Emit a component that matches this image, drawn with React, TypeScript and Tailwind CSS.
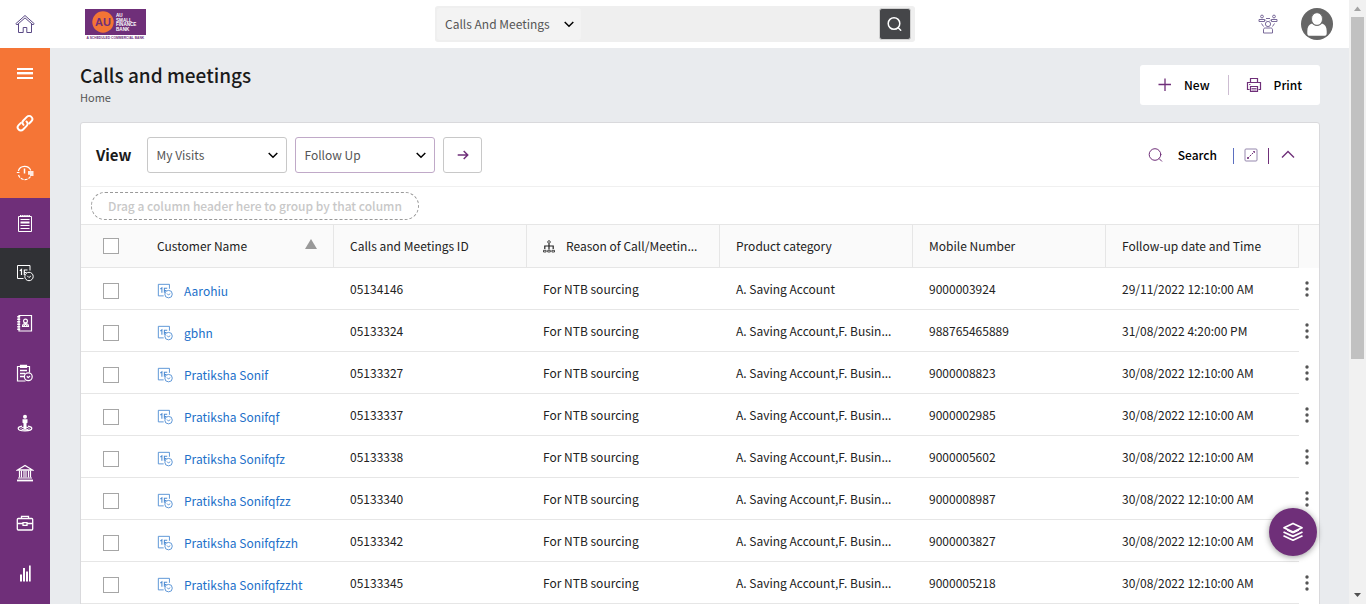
import React from "react";

type IconProps = { className?: string };

const HomeIcon = ({ className }: IconProps) => (
  <svg className={className} viewBox="0 0 20 20" fill="none" stroke="currentColor" strokeWidth="1">
    <path d="M0.8 9.7 10 1.500l9.200 8.200-1.200 1.200L10 3.900 2 10.900z" />
    <path d="M3.500 10v8.500h4.700v-5h3.600v5h4.700V10" />
  </svg>
);

const MenuIcon = ({ className }: IconProps) => (
  <svg className={className} viewBox="0 0 18 18" fill="currentColor" shapeRendering="crispEdges">
    <path d="M1 4h16v2H1zM1 8h16v2H1zM1 13h16v2H1z" />
    <path d="M1 10h16v1H1z" opacity=".4" />
  </svg>
);

const LinkIcon = ({ className }: IconProps) => (
  <svg className={className} viewBox="0 0 24 24" fill="none" stroke="currentColor" strokeWidth="2.600" strokeLinecap="round" strokeLinejoin="round">
    <path d="M10 14.500c-1.800-1.800-1.800-4.200-.2-5.800l4.700-4.900c1.700-1.700 4.400-1.700 6 0 1.600 1.600 1.600 4.200 0 5.800l-3 3" />
    <path d="M14 10c1.800 1.800 1.800 4.200.2 5.800l-4.700 4.900c-1.700 1.700-4.400 1.700-6 0-1.600-1.600-1.600-4.200 0-5.800l3-3" />
  </svg>
);

const TimerIcon = ({ className }: IconProps) => (
  <svg className={className} viewBox="0 0 18 18" fill="none" stroke="currentColor" strokeWidth="1.200">
    <path d="M2.300 7a6.700 6.700 0 0 1 12.500-.5M.8 8.500h2.700" />
    <path d="M2.500 11a6.700 6.700 0 0 0 12 1.500" strokeDasharray="3 1" />
    <path d="M8.500 4.500v5" strokeWidth="1.500" />
    <path d="M12 7h5.500v5H14v-1.200h-2z" fill="currentColor" stroke="none" opacity=".85" />
  </svg>
);

const NotepadIcon = ({ className }: IconProps) => (
  <svg className={className} viewBox="0 0 18 18" fill="none" stroke="currentColor">
    <path d="M2.500 2.500h13v15h-13z" />
    <path d="M4 2h10" strokeWidth="2" strokeDasharray="1.500 .6" />
    <path d="M4.500 5.500h9M4.500 11.500h9M4.500 14.500h9" />
    <path d="M4.500 8.500h9" strokeWidth="2" />
  </svg>
);

const CalendarIcon = ({ className }: IconProps) => (
  <svg className={className} viewBox="0 0 18 18" fill="none" stroke="currentColor">
    <path d="M7.500 14.500h-6v-13h12.500v5" />
    <path d="M3.800 6.800 5.500 5.500V11M11.500 6H8.300v2.500h2.200M8.300 8.500V11" strokeWidth="1.200" />
    <circle cx="13" cy="12.500" r="4.200" />
    <path d="m11.200 11.800 1.700 1.700 2-1.500" />
  </svg>
);

const ContactIcon = ({ className }: IconProps) => (
  <svg className={className} viewBox="0 0 18 18" fill="none" stroke="currentColor">
    <path d="M3 1.500h12.500v15.500H3z" strokeWidth="1.200" />
    <path d="M2.700 2v15" strokeWidth="3" strokeDasharray="1.500 1" />
    <circle cx="9.500" cy="7" r="1.900" strokeWidth="1.200" />
    <path d="M6.500 12.500c0-2 1-3 3-3s3 1 3 3zM8 12l1.500-2 1.500 2" strokeWidth="1.200" />
  </svg>
);

const ClipboardClockIcon = ({ className }: IconProps) => (
  <svg className={className} viewBox="0 0 18 18" fill="none" stroke="currentColor" strokeWidth="1.200">
    <path d="M9.500 17h-8V2.500h12v6" />
    <path d="M4.500 1.300h6v2.200h-6z" />
    <path d="M4 6.500h7M4 9.500h5M4 12.500h4" strokeWidth="1.400" />
    <circle cx="12.300" cy="12.800" r="3.900" />
    <path d="m10.800 12.300 1.400 1.300 1.800-1.600" />
  </svg>
);

const PersonPinIcon = ({ className }: IconProps) => (
  <svg className={className} viewBox="0 0 18 18" fill="none" stroke="currentColor">
    <circle cx="9" cy="2.800" r="2" fill="currentColor" stroke="none" />
    <path d="M6.500 5.300h5v3.500l-1 .5v6h-3v-6l-1-.5z" fill="currentColor" stroke="none" />
    <ellipse cx="9" cy="14.500" rx="4" ry="1.400" />
    <path d="M6 12.200c-2.400.4-3.800 1.200-3.800 2.200 0 1.400 3 2.400 6.800 2.400s6.800-1 6.800-2.400c0-1-1.400-1.800-3.800-2.200" strokeWidth="1.200" />
  </svg>
);

const BankIcon = ({ className }: IconProps) => (
  <svg className={className} viewBox="0 0 18 18" fill="none" stroke="currentColor">
    <path d="M1.500 6 9 1.500 16.500 6z" strokeWidth="1.300" />
    <path d="M3.500 6.500v7M5.500 6.500v7M8 6.500v7M10 6.500v7M12.500 6.500v7M14.500 6.500v7" strokeWidth="1.200" />
    <path d="M2 14h14" />
    <path d="M1 16.500h16" strokeWidth="1.800" />
  </svg>
);

const BriefcaseIcon = ({ className }: IconProps) => (
  <svg className={className} viewBox="0 0 18 18" fill="none" stroke="currentColor" strokeWidth="1.300">
    <rect x="1.300" y="4.500" width="15.400" height="11.500" rx="1" />
    <path d="M5.500 4.500V2.300h7v2.200M1.500 9.500h5.500M11 9.500h5.500M7 8.700h4v2.600H7z" />
  </svg>
);

const BarsIcon = ({ className }: IconProps) => (
  <svg className={className} viewBox="0 0 18 18" fill="currentColor">
    <path d="M4 10.500h2V17.500H4zM7 4h2v13.500H7zM10 7.500h2v10h-2zM13 1.500h1.700v16H13z" />
  </svg>
);

const TeamIcon = ({ className }: IconProps) => (
  <svg className={className} viewBox="0 0 20 20" fill="none" stroke="currentColor" strokeWidth=".9">
    <circle cx="4" cy="2.500" r="1.400" />
    <circle cx="16" cy="2.500" r="1.400" />
    <path d="M1 7.500V5.500h5.500v2zM13.500 7.500V5.500H19v2zM8 4.500h4M3.500 9.500l2 3M16.500 9.500l-2 3M7 5.500l1 1.200M13 5.500l-1 1.200" />
    <circle cx="10" cy="10" r="2.600" />
    <path d="M5.500 19v-3.200c0-1.300.7-1.800 1.800-1.800h5.400c1.100 0 1.800.5 1.800 1.800V19z" />
  </svg>
);

const AvatarIcon = ({ className }: IconProps) => (
  <svg className={className} viewBox="0 0 32 32">
    <circle cx="16" cy="16" r="16" fill="#666" />
    <path d="M11 15.500c1.300 1.600 3 2.400 5 2.400s3.700-.8 5-2.400c3 .8 4.700 3.200 4.700 7.500v2.500c0 1.400-1 2.300-2.500 2.300H8.800c-1.500 0-2.500-.9-2.500-2.300V23c0-4.300 1.700-6.700 4.700-7.500z" fill="#fff" />
    <ellipse cx="16" cy="11" rx="5.500" ry="6.300" fill="#fff" stroke="#666" strokeWidth=".8" />
  </svg>
);

const SearchIcon = ({ className }: IconProps) => (
  <svg className={className} viewBox="0 0 16 16" fill="none" stroke="currentColor" strokeLinecap="round">
    <circle cx="7" cy="7.500" r="5.800" />
    <path d="m11.200 11.700 2.500 2.500" />
  </svg>
);

const PlusIcon = ({ className }: IconProps) => (
  <svg className={className} viewBox="0 0 14 14" stroke="currentColor" strokeWidth="1.300">
    <path d="M7 .5v12.500M.5 6.500h12.500" />
  </svg>
);

const PrinterIcon = ({ className }: IconProps) => (
  <svg className={className} viewBox="0 0 16 16" fill="none" stroke="currentColor" strokeWidth="1.200">
    <path d="M4.500 5.500v-4h7v4M3.500 12.500h-2v-7h13v7h-2M4.500 9.500h7v5h-7z" />
    <path d="M5.500 11.500h5M5.500 13h5M3 7.500h1.500" strokeWidth=".8" />
  </svg>
);

const ExpandIcon = ({ className }: IconProps) => (
  <svg className={className} viewBox="0 0 14 14" fill="none" stroke="currentColor">
    <rect x="1" y="1" width="12" height="12" rx="1" stroke="#9587ad" />
    <path d="m3.500 10.500 7-7" strokeDasharray="2 1" />
    <path d="M9 3.500h1.500V5M3.500 9v1.500H5" strokeWidth=".8" />
  </svg>
);

const ChevronUp = ({ className }: IconProps) => (
  <svg className={className} viewBox="0 0 14 14" fill="none" stroke="currentColor" strokeWidth="1.400">
    <path d="M1 9.500l6-6 6 6" />
  </svg>
);

const ChevronDown = ({ className }: IconProps) => (
  <svg className={className} viewBox="0 0 12 12" fill="none" stroke="currentColor" strokeWidth="1.500">
    <path d="m1.700 4 4.300 4.200L10.300 4" />
  </svg>
);

const ArrowRight = ({ className }: IconProps) => (
  <svg className={className} viewBox="0 0 12 12" fill="none" stroke="currentColor" strokeWidth="1.500">
    <path d="M.7 6h10M6.700 2l4 4-4 4" />
  </svg>
);

const HierarchyIcon = ({ className }: IconProps) => (
  <svg className={className} viewBox="0 0 14 14" fill="none" stroke="currentColor">
    <circle cx="6" cy="3" r="1.300" strokeWidth=".8" />
    <path d="M6 4.500v6M1.800 10V7h8.400v3" strokeWidth="1.200" />
    <path d="M.5 13v-1.700h2.600V13zM4.700 13v-1.700h2.600V13zM8.900 13v-1.700h2.600V13z" strokeWidth=".8" />
  </svg>
);

const LayersIcon = ({ className }: IconProps) => (
  <svg className={className} viewBox="0 0 22 20" fill="none" stroke="currentColor" strokeWidth="1.800" strokeLinejoin="round">
    <path d="m11 1.500 9 4.300-9 4.300-9-4.300z" />
    <path d="M1.500 10 11 14.400l9.500-4.400M1.500 13.800 11 18.200l9.500-4.400" />
    <path d="m5 8.300 6 2.800 6-2.800" strokeWidth="1" />
  </svg>
);

const Logo = () => (
  <svg viewBox="0 0 61 31" className="h-[31px] w-[61px]" role="img" aria-label="AU Small Finance Bank" fontFamily="Liberation Sans, sans-serif" fontWeight="bold">
    <rect width="61" height="26" fill="#6f2f79" />
    <circle cx="18" cy="13" r="10.700" fill="#f37435" />
    <text x="18" y="17" fontSize="11" textAnchor="middle" fill="#6f2f79">AU</text>
    <g fill="#fff" fontSize="4.600">
      <text x="31" y="8.300">AU</text>
      <text x="31" y="12.800">SMALL</text>
      <text x="31" y="17.300">FINANCE</text>
      <text x="31" y="21.800">BANK</text>
    </g>
    <text x="1.500" y="30" fontSize="3.300" fill="#6f2f79">A SCHEDULED COMMERCIAL BANK</text>
  </svg>
);

const navItems = [
  { label: "Menu", icon: MenuIcon, tone: "bg-[#f57536]" },
  { label: "Quick links", icon: LinkIcon, tone: "bg-[#f57536]" },
  { label: "Recent", icon: TimerIcon, tone: "bg-[#f57536]" },
  { label: "Notes", icon: NotepadIcon, tone: "bg-[#6f2f79]" },
  { label: "Calls and meetings", icon: CalendarIcon, tone: "bg-[#303135]" },
  { label: "Contacts", icon: ContactIcon, tone: "bg-[#6f2f79]" },
  { label: "Tasks", icon: ClipboardClockIcon, tone: "bg-[#6f2f79]" },
  { label: "Leads", icon: PersonPinIcon, tone: "bg-[#6f2f79]" },
  { label: "Accounts", icon: BankIcon, tone: "bg-[#6f2f79]" },
  { label: "Opportunities", icon: BriefcaseIcon, tone: "bg-[#6f2f79]" },
  { label: "Reports", icon: BarsIcon, tone: "bg-[#6f2f79]" },
];

const multi = "A. Saving Account,F. Busin...";
const rows = [
  ["Aarohiu", "05134146", "A. Saving Account", "9000003924", "29/11/2022 12:10:00 AM"],
  ["gbhn", "05133324", multi, "988765465889", "31/08/2022 4:20:00 PM"],
  ["Pratiksha Sonif", "05133327", multi, "9000008823", "30/08/2022 12:10:00 AM"],
  ["Pratiksha Sonifqf", "05133337", multi, "9000002985", "30/08/2022 12:10:00 AM"],
  ["Pratiksha Sonifqfz", "05133338", multi, "9000005602", "30/08/2022 12:10:00 AM"],
  ["Pratiksha Sonifqfzz", "05133340", multi, "9000008987", "30/08/2022 12:10:00 AM"],
  ["Pratiksha Sonifqfzzh", "05133342", multi, "9000003827", "30/08/2022 12:10:00 AM"],
  ["Pratiksha Sonifqfzzht", "05133345", multi, "9000005218", "30/08/2022 12:10:00 AM"],
];

const Checkbox = ({ label }: { label: string }) => (
  <input type="checkbox" aria-label={label} className="block size-4 appearance-none border border-[#a6a6a6] bg-white checked:bg-[#6f2f79]" />
);

function ViewSelect({ label, options, border }: { label: string; options: string[]; border: string }) {
  return (
    <div className="relative w-[140px]">
      <select aria-label={label} className={`h-9 w-full appearance-none rounded-[3px] border bg-white pl-2 text-[#555] ${border}`}>
        {options.map((o) => (
          <option key={o}>{o}</option>
        ))}
      </select>
      <ChevronDown className="pointer-events-none absolute top-3 right-2 size-3 text-black" />
    </div>
  );
}

const headCell = "border-r border-b border-[#e6e6e6] px-4 text-left font-normal whitespace-nowrap";
const bodyCell = "border-b border-[#e6e6e6] px-4 whitespace-nowrap";

export default function App() {
  return (
    <div className="flex h-screen overflow-hidden bg-[#e9ebee] font-['Noto_Sans_CJK_SC',sans-serif] text-xs leading-5 text-[#222]">
      <div className="flex min-w-0 flex-1 flex-col">
        <header className="flex h-12 shrink-0 items-center bg-white">
          <a href="#home" aria-label="Home" className="flex w-[50px] justify-center text-[#5b4a86]">
            <HomeIcon className="size-5" />
          </a>
          <div className="flex w-[385px] pl-[35px]">
            <Logo />
          </div>
          <form className="flex h-9 w-[480px] items-center rounded-[3px] bg-[#efefef] pr-1 pl-0.5" onSubmit={(e) => e.preventDefault()}>
            <div className="relative w-36">
              <select aria-label="Search in" className="h-8 w-full appearance-none rounded-[3px] bg-[#f3f3f3] pl-2 text-[#555]">
                <option>Calls And Meetings</option>
              </select>
              <ChevronDown className="pointer-events-none absolute top-2.5 right-1.5 size-3 text-black" />
            </div>
            <input type="search" aria-label="Search" className="h-8 min-w-0 flex-1 bg-transparent px-2 outline-none" />
            <button aria-label="Run search" className="flex size-8 items-center justify-center rounded-[3px] border border-[#d0d0d0] bg-[#454649] text-white">
              <SearchIcon className="size-4 stroke-[1.5]" />
            </button>
          </form>
          <div className="flex flex-1 items-center justify-end gap-[23px] pr-4">
            <button aria-label="Team" className="text-[#6b5a8e]">
              <TeamIcon className="size-5" />
            </button>
            <button aria-label="Profile">
              <AvatarIcon className="size-8" />
            </button>
          </div>
        </header>

        <div className="flex min-h-0 flex-1">
          <nav aria-label="Main" className="w-[50px] shrink-0 overflow-hidden bg-[#6f2f79] text-white">
            {navItems.map(({ label, icon: Icon, tone }) => (
              <a key={label} href="#nav" aria-label={label} className={`flex h-[50px] items-center justify-center ${tone}`}>
                <Icon className="size-[18px]" />
              </a>
            ))}
          </nav>

          <main className="min-w-0 flex-1 overflow-hidden pt-4 pr-[29px] pl-[30px]">
            <div className="flex items-start justify-between">
              <div>
                <h1 className="text-[19px] leading-[22px] font-medium text-[#1a1a1a]">Calls and meetings</h1>
                <a href="#home" className="mt-px block text-[11px] text-[#555]">Home</a>
              </div>
              <div className="mt-px flex h-10 items-center rounded-[3px] bg-white font-medium text-black">
                <button className="flex items-center gap-3 px-[18px]">
                  <PlusIcon className="size-3.5 text-[#6f2f79]" />
                  New
                </button>
                <span className="h-5 w-px bg-[#cdbdd2]" />
                <button className="flex items-center gap-3 pr-[18px] pl-[17px]">
                  <PrinterIcon className="size-4 text-[#6f2f79]" />
                  Print
                </button>
              </div>
            </div>

            <section className="mt-[15px] min-h-screen rounded-[3px] border border-[#d9d9dc] bg-white">
              <div className="flex h-16 items-center justify-between border-b border-[#f0f0f0] pr-6 pl-[15px]">
                <div className="flex items-center gap-2">
                  <h2 className="mr-2 text-[15px] font-bold text-[#1a1a1a]">View</h2>
                  <ViewSelect label="View" options={["My Visits", "All Visits"]} border="border-[#c8c8c8]" />
                  <ViewSelect label="Type" options={["Follow Up", "New Visit"]} border="border-[#c0a9c8]" />
                  <button aria-label="Go" className="flex h-9 w-[39px] items-center justify-center rounded-[3px] border border-[#c8c8c8] text-[#6f2f79]">
                    <ArrowRight className="size-3" />
                  </button>
                </div>
                <div className="flex items-center text-[#6f2f79]">
                  <button className="flex items-center gap-3.5 font-medium">
                    <SearchIcon className="size-4" />
                    <span className="text-black">Search</span>
                  </button>
                  <span className="mt-0.5 ml-4 h-4 w-px bg-[#5b6fc0]" />
                  <button aria-label="Full screen" className="mx-2.5">
                    <ExpandIcon className="block size-3.5" />
                  </button>
                  <span className="mt-0.5 h-4 w-px bg-[#6f2f79]" />
                  <button aria-label="Collapse" className="ml-3">
                    <ChevronUp className="block size-3.5" />
                  </button>
                </div>
              </div>

              <div className="flex h-[37px] items-center pl-2.5">
                <div className="h-7 rounded-full border border-dashed border-[#999] px-4 leading-[26px] font-medium text-[#c8c8c8]">
                  Drag a column header here to group by that column
                </div>
              </div>

              <table className="w-full table-fixed border-separate border-spacing-0 border-t border-[#e6e6e6]">
                <colgroup>
                  <col className="w-[60px]" />
                  <col />
                  <col />
                  <col />
                  <col />
                  <col />
                  <col />
                  <col className="w-5" />
                </colgroup>
                <thead>
                  <tr className="h-[43px] bg-[#fafafa]">
                    <th className="border-b border-[#e6e6e6] pl-[22px]">
                      <Checkbox label="Select all" />
                    </th>
                    <th className={headCell}>
                      <span className="flex items-center justify-between">
                        Customer Name
                        <svg viewBox="0 0 12 10" className="mb-1 h-2.5 w-3" fill="#999">
                          <path d="M6 0l6 10H0z" />
                        </svg>
                      </span>
                    </th>
                    <th className={headCell}>Calls and Meetings ID</th>
                    <th className={headCell}>
                      <span className="flex items-center gap-[9px]">
                        <HierarchyIcon className="size-3.5 shrink-0" />
                        Reason of Call/Meetin...
                      </span>
                    </th>
                    <th className={headCell}>Product category</th>
                    <th className={headCell}>Mobile Number</th>
                    <th className={headCell}>Follow-up date and Time</th>
                    <th aria-label="Actions" />
                  </tr>
                </thead>
                <tbody>
                  {rows.map(([name, id, product, mobile, date]) => (
                    <tr key={id} className="h-[42px]">
                      <td className="border-b border-[#e6e6e6] pt-1 pl-[22px]">
                        <Checkbox label={`Select ${name}`} />
                      </td>
                      <td className={`${bodyCell} pt-1`}>
                        <a href="#record" className="flex items-center gap-[11px] text-[#2270c9]">
                          <CalendarIcon className="size-4 shrink-0 opacity-80" />
                          {name}
                        </a>
                      </td>
                      <td className={bodyCell}>{id}</td>
                      <td className={bodyCell}>For NTB sourcing</td>
                      <td className={bodyCell}>{product}</td>
                      <td className={bodyCell}>{mobile}</td>
                      <td className={bodyCell}>{date}</td>
                      <td>
                        <button aria-label={`Actions for ${name}`} className="flex w-4 justify-center">
                          <svg viewBox="0 0 4 16" className="h-4 w-1" fill="#555">
                            <circle cx="2" cy="2" r="1.700" />
                            <circle cx="2" cy="8" r="1.700" />
                            <circle cx="2" cy="14" r="1.700" />
                          </svg>
                        </button>
                      </td>
                    </tr>
                  ))}
                </tbody>
              </table>
            </section>
          </main>
        </div>
      </div>

      <div aria-hidden="true" className="flex w-[17px] shrink-0 flex-col items-center bg-[#f1f1f1]">
        <svg viewBox="0 0 17 17" className="size-[17px]" fill="#a3a3a3">
          <path d="M8.500 6.500 12 11H5z" />
        </svg>
        <div className="w-[13px] basis-[342px] bg-[#c1c1c1]" />
        <svg viewBox="0 0 17 17" className="mt-auto size-[17px]" fill="#505050">
          <path d="M5 6h7l-3.500 4z" />
        </svg>
      </div>

      <button aria-label="Layers" className="fixed right-[49px] bottom-12 flex size-12 items-center justify-center rounded-full bg-[#6f2f79] text-white shadow-[0_1px_6px_rgba(0,0,0,0.4)]">
        <LayersIcon className="h-5 w-[22px]" />
      </button>
    </div>
  );
}
